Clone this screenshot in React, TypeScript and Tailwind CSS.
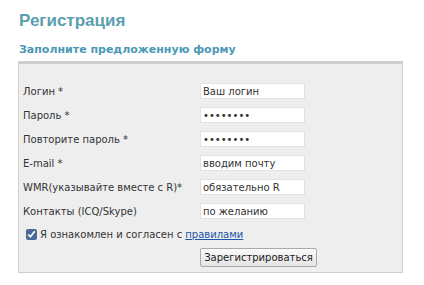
const rows = [
  { label: "Логин *", value: "Ваш логин", type: "text" },
  { label: "Пароль *", value: "password", type: "password" },
  { label: "Повторите пароль *", value: "password", type: "password" },
  { label: "E-mail *", value: "вводим почту", type: "text" },
  { label: "WMR(указывайте вместе с R)*", value: "обязательно R", type: "text" },
  { label: "Контакты (ICQ/Skype)", value: "по желанию", type: "text" },
];

export default function App() {
  return (
    <div className="h-[285px] w-[424px] bg-white font-['DejaVu_Sans',sans-serif] text-[#333]">
      <div className="pl-[19px] pt-[11px]">
        <h1 className="font-['Liberation_Sans',sans-serif] text-[17px] font-bold leading-[20px] text-[#5a9fae]">
          Регистрация
        </h1>
        <h2 className="mt-[12px] text-[11px] font-bold leading-[14px] text-[#4b98b6]">
          Заполните предложенную форму
        </h2>
      </div>

      <div className="ml-[18px] mt-[4px] w-[385px] border border-t-[3px] border-[#cfcfcf] bg-[#eeeeee] pb-[4px] pl-[4px] pt-[19px]">
        <div className="flex flex-col gap-[8px]">
          {rows.map((r) => (
            <div key={r.label} className="flex h-[16px] items-center">
              <span className="w-[177px] text-[10px]">{r.label}</span>
              <input
                type={r.type}
                defaultValue={r.value}
                className="h-[16px] w-[105px] border border-[#e2e2e2] bg-white px-[2px] text-[10px] text-[#333] outline-none"
              />
            </div>
          ))}
        </div>

        <label className="mt-[8px] flex items-center pl-[3px] text-[10px]">
          <input type="checkbox" defaultChecked className="mr-[3px] h-[11px] w-[11px] accent-[#4a6a9a]" />
          Я ознакомлен и согласен с&nbsp;
          <a href="#" className="text-[#2255aa] underline">правилами</a>
        </label>

        <div className="mt-[2px] pl-[177px]">
          <button className="h-[19px] w-[117px] rounded-[2px] border border-[#aaaaaa] bg-gradient-to-b from-[#fafafa] to-[#e4e4e4] text-[10px] text-[#222]">
            Зарегистрироваться
          </button>
        </div>
      </div>
    </div>
  );
}
